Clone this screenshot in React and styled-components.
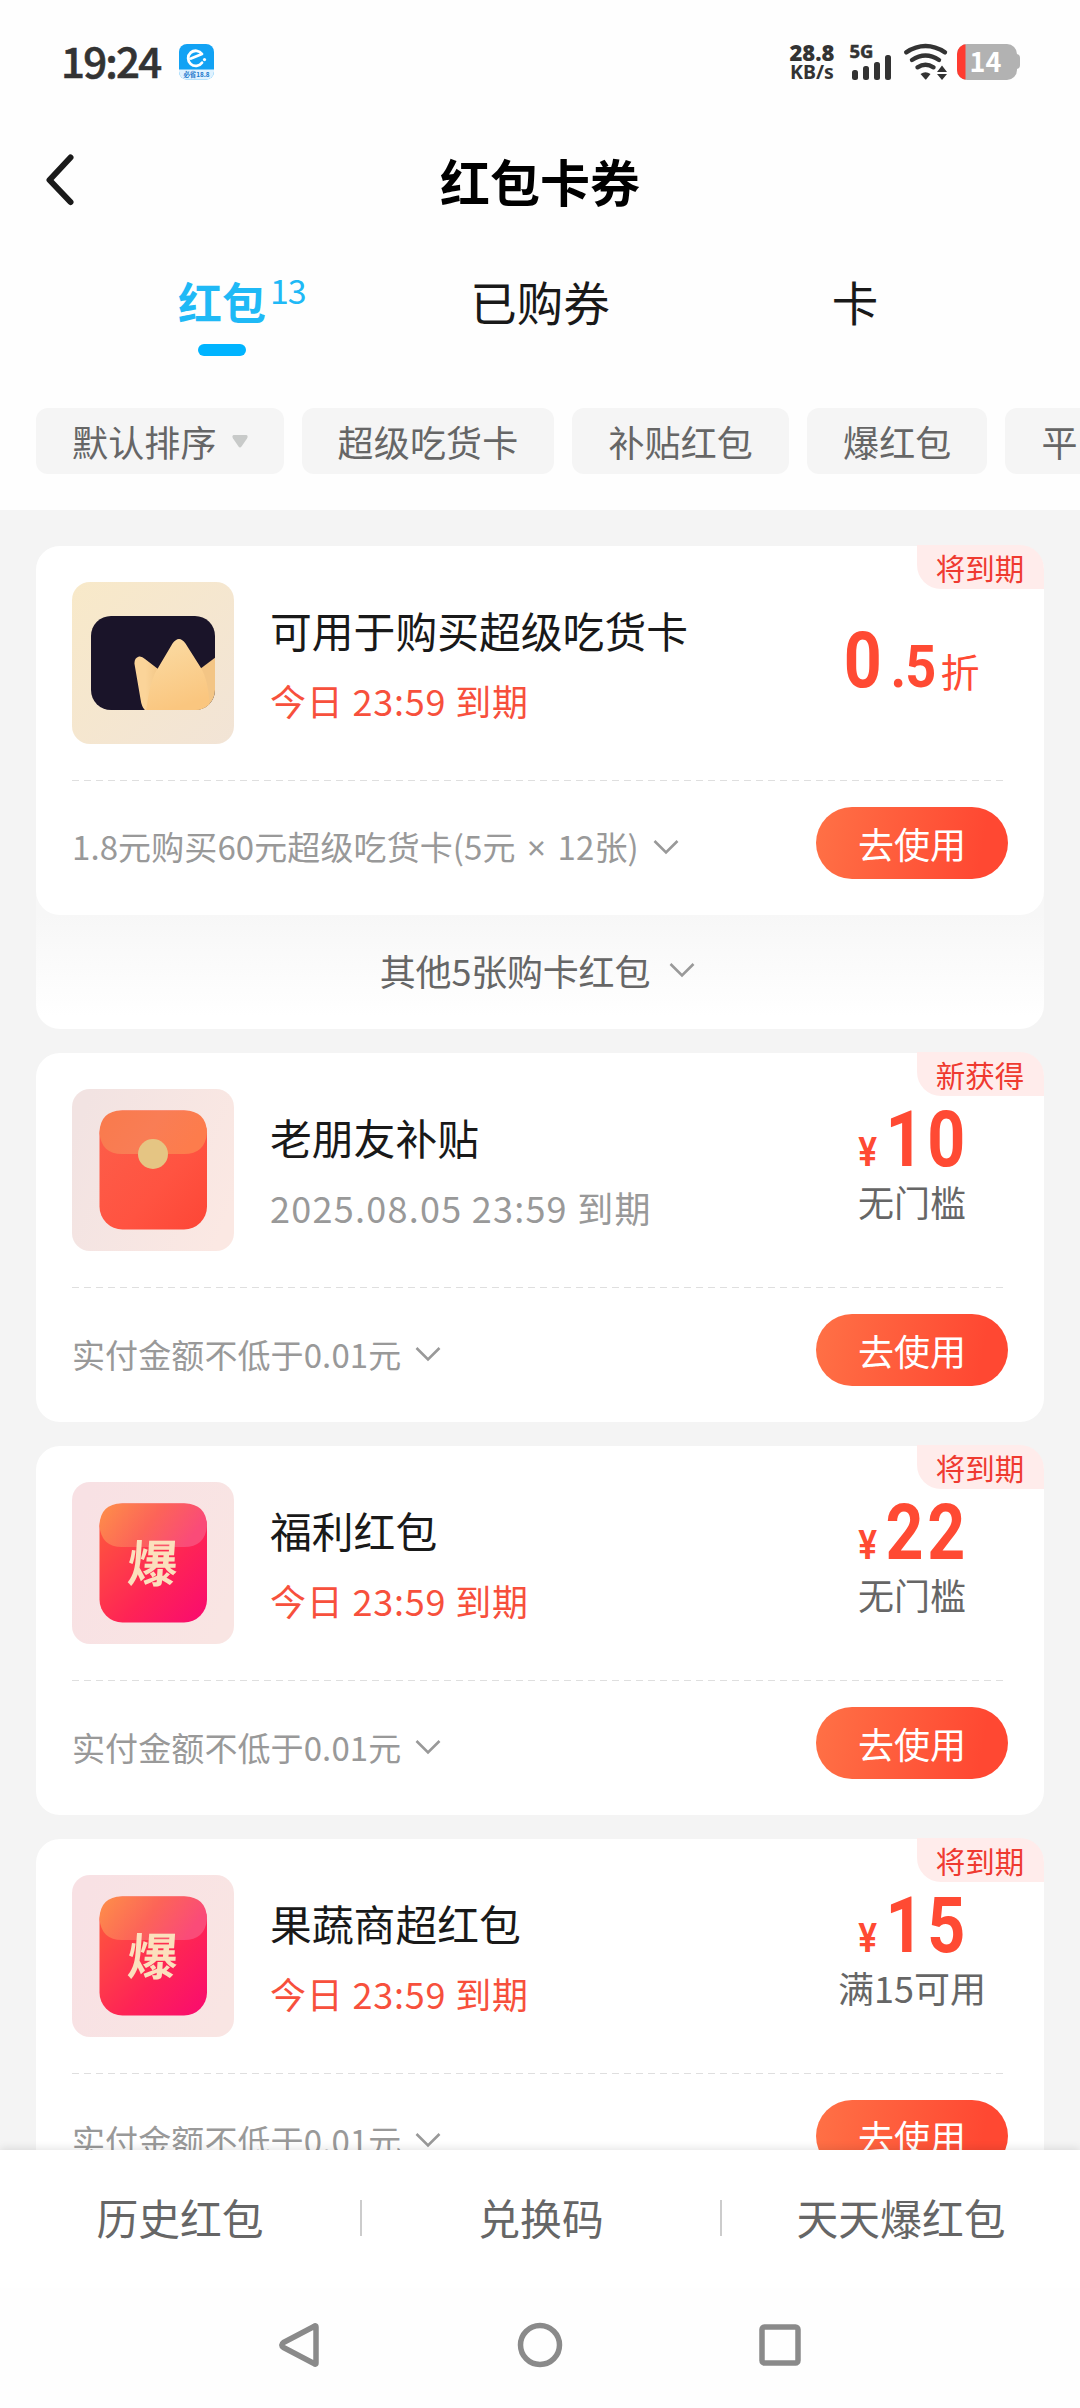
import React from 'react';
import styled, {createGlobalStyle} from 'styled-components';

const GlobalStyle = createGlobalStyle`
    * {
        box-sizing: border-box;
    }
    body {
        margin: 0;
        background: #fff;
        font-family: "Noto Sans CJK SC", "Noto Sans", sans-serif;
    }
    svg {
        flex: none;
        overflow: visible;
    }
`;

const Page = styled.div`
    display: flex;
    flex-direction: column;
    width: 1080px;
    height: 2408px;
    overflow: hidden;
    background: #fefefe;
    color: #191919;
    white-space: nowrap;
`;

/* ---------- status bar ---------- */
const StatusBar = styled.div`
    display: flex;
    align-items: center;
    height: 124px;
    padding: 0 60px 0 61px;
    color: #333;
`;
const Clock = styled.div`
    width: 118px;
    padding-bottom: 5px;
    font-size: 42px;
    font-weight: 500;
    line-height: 50px;
    letter-spacing: -1.8px;
    -webkit-text-stroke: 0.6px #333;
`;
const StatusRight = styled.div`
    display: flex;
    align-items: center;
    margin-left: auto;
    height: 36px;
`;
const Speed = styled.div`
    width: 50px;
    margin-right: 14px;
    text-align: center;
    font-family: "Noto Sans", sans-serif;
    font-weight: 700;
    font-size: 19.5px;
    line-height: 20px;
    & b {
        display: block;
        font-size: 22px;
    }
`;
const WifiBox = styled.div`
    display: flex;
    margin: 0 9px 0 12px;
`;

/* ---------- title and tabs ---------- */
const TitleBar = styled.div`
    display: grid;
    grid-template-columns: 120px 1fr 120px;
    align-items: center;
    height: 116px;
    padding-bottom: 5px;
    & svg {
        margin-left: 44px;
    }
`;
const Title = styled.h1`
    margin: 0;
    text-align: center;
    font-size: 50px;
    line-height: 60px;
    font-weight: 700;
    color: #000;
`;
const Tabs = styled.div`
    display: grid;
    grid-template-columns: 318px 318px 312px;
    height: 168px;
    padding: 31px 0 0 63px;
`;
const Tab = styled.div`
    display: flex;
    flex-direction: column;
    align-items: center;
    font-size: ${p => p.$active ? 44 : 46.5}px;
    font-weight: ${p => p.$active ? 700 : 400};
    line-height: 60px;
    color: ${p => p.$active ? '#1fb9f6' : '#191919'};
    & span {
        position: relative;
    }
    &::after {
        content: '';
        width: 48px;
        height: 12px;
        margin-top: 13px;
        border-radius: 6px;
        background: ${p => p.$active ? '#00b4ff' : 'transparent'};
    }
`;
const Count = styled.i`
    position: absolute;
    left: 100%;
    top: -11px;
    margin-left: 4px;
    font-size: 34px;
    font-style: normal;
    font-weight: 400;
    letter-spacing: -1px;
`;

const Chips = styled.div`
    display: flex;
    gap: 18px;
    height: 102px;
    padding-left: 36px;
    overflow: hidden;
`;
const Chip = styled.div`
    display: flex;
    flex: none;
    align-items: center;
    gap: 15px;
    min-width: 180px;
    height: 66px;
    padding: 0 36px;
    border-radius: 12px;
    background: #f5f5f5;
    color: #666;
    font-size: 36px;
    line-height: 66px;
    letter-spacing: 0.15px;
`;

/* ---------- coupon list ---------- */
const List = styled.div`
    display: flex;
    flex-direction: column;
    gap: 24px;
    height: 1640px;
    padding: 36px 36px 0;
    overflow: hidden;
    background: #f4f4f4;
`;
const Group = styled.div`
    flex: none;
    border-radius: 24px;
    background: ${p => p.$stacked ? 'linear-gradient(#f7f7f7 369px, #fff 470px)' : 'none'};
`;
const Card = styled.div`
    position: relative;
    display: flex;
    flex-direction: column;
    height: 369px;
    padding: 36px 36px 0;
    border-radius: 24px;
    background: #fff;
`;
const Flag = styled.div`
    position: absolute;
    top: -1px;
    right: 0;
    width: 127px;
    height: 44px;
    padding-right: 1px;
    border-radius: 0 24px 0 24px;
    background: #ffeceb;
    color: #ef3a30;
    font-size: 29.5px;
    line-height: 44px;
    text-align: center;
`;
const Main = styled.div`
    display: flex;
    height: 198px;
`;
const Info = styled.div`
    flex: 1;
    padding: 18px 0 0 36px;
`;
const Name = styled.div`
    font-size: 41.8px;
    line-height: 60px;
`;
const Expire = styled.div`
    margin-top: 15px;
    font-size: 36px;
    line-height: 50px;
    letter-spacing: ${p => p.$soon ? 0.8 : 1.25}px;
    color: ${p => p.$soon ? '#f7503c' : '#999'};
`;
const Value = styled.div`
    display: flex;
    flex-direction: column;
    align-items: center;
    width: 192px;
    padding-top: ${p => p.$discount ? 34 : 6}px;
    color: #666;
    font-size: 36px;
    line-height: 50px;
`;
const Amount = styled.div`
    display: flex;
    align-items: baseline;
    height: 81px;
    padding: ${p => p.$discount ? '0 4px 0 0' : '0 0 0 9px'};
    color: #ff4a33;
    line-height: 90px;
`;
const Digits = styled.span`
    margin-right: ${p => p.$gap || 0}px;
    font-family: Roboto, sans-serif;
    font-weight: 700;
    font-size: ${p => p.$size}px;
    letter-spacing: ${p => p.$size > 70 ? 4.5 : -1}px;
    transform: scaleX(${p => p.$size > 70 ? 0.85 : 0.9});
`;
const Yen = styled.span`
    font-family: Roboto, sans-serif;
    font-weight: 600;
    font-size: 40px;
    transform: scaleX(0.88);
`;
const Unit = styled.span`
    margin-left: 3px;
    font-size: 39px;
`;

const Dashes = styled.div`
    flex: none;
    width: 932px;
    height: 1px;
    background: repeating-linear-gradient(90deg, #dfdfdf 0 7px, #fff 7px 12px);
`;
const Foot = styled.div`
    display: flex;
    align-items: center;
    justify-content: space-between;
    height: 72px;
    margin-top: 26px;
`;
const Rule = styled.div`
    display: flex;
    align-items: center;
    gap: 14px;
    padding-top: 8px;
    color: #999;
    font-size: 33px;
    line-height: 50px;
    letter-spacing: 0.1px;
`;
const Times = styled.span`
    margin: 0 4px;
    font-family: "Noto Sans", sans-serif;
`;
const UseButton = styled.button`
    width: 192px;
    height: 72px;
    padding: 0;
    border: 0;
    border-radius: 36px;
    background: linear-gradient(100deg, #ff7146, #ff4832 85%);
    color: #fff;
    font: 400 36px/72px "Noto Sans CJK SC", sans-serif;
`;
const More = styled.div`
    display: flex;
    align-items: center;
    justify-content: center;
    gap: 19px;
    height: 114px;
    padding: 0 5px 4px 0;
    color: #666;
    font-size: 36px;
    line-height: 50px;
    letter-spacing: -0.2px;
`;

/* ---------- bottom ---------- */
const Footer = styled.div`
    position: relative;
    display: grid;
    grid-template-columns: repeat(3, 1fr);
    align-items: center;
    height: 138px;
    padding-bottom: 2px;
    background: #fff;
    box-shadow: 0 -2px 8px rgba(0, 0, 0, 0.1);
    clip-path: inset(-12px 0 0 0);
`;
const FooterLink = styled.div`
    border-left: ${p => p.$first ? 0 : 2}px solid #ccc;
    height: 36px;
    color: #666;
    font-size: 41.8px;
    line-height: 34px;
    text-align: center;
`;
const NavBar = styled.div`
    display: grid;
    grid-template-columns: repeat(3, 240px);
    justify-content: center;
    align-items: center;
    justify-items: center;
    height: 120px;
    padding-bottom: 6px;
`;

const AppBadge = () => (
    <svg width="36" height="36" viewBox="0 0 36 36">
        <defs>
            <clipPath id="badge"><rect width="35" height="35.5" rx="8"/></clipPath>
        </defs>
        <g clipPath="url(#badge)">
            <rect width="36" height="36" fill="#12a2f4"/>
            <rect y="25.5" width="36" height="11" fill="#dff2ff"/>
        </g>
        <path d="M12 14.5 L23 10 A7.6 7.6 0 1 0 23 18.7" fill="none" stroke="#fff" strokeWidth="2.8" strokeLinecap="round" strokeLinejoin="round"/>
        <circle cx="25.5" cy="15.6" r="1.6" fill="#fff"/>
        <text x="17.5" y="32.8" textAnchor="middle" fontSize="6.4" fontWeight="700" fill="#1a78cc">必省18.8</text>
    </svg>
);

const Signal = () => (
    <svg width="41" height="36" viewBox="0 0 41 36" fill="#333">
        <text x="-1.5" y="14" fontFamily="Noto Sans" fontWeight="700" fontSize="18.5" stroke="#333" strokeWidth="0.5">5G</text>
        <rect x="1" y="26" width="6" height="10" rx="2.5"/>
        <rect x="12" y="22" width="6" height="14" rx="2.5"/>
        <rect x="23" y="18" width="6" height="18" rx="2.5"/>
        <rect x="34" y="11" width="6" height="25" rx="2.5"/>
    </svg>
);

const Wifi = () => (
    <svg width="44" height="36" viewBox="0 0 44 36">
        <g fill="none" stroke="#333" strokeWidth="4.4" strokeLinecap="round">
            <path d="M2.2 8.4 Q21.5 -4.2 41 8.4"/>
            <path d="M8 16 Q21.5 7 35 16"/>
            <path d="M13.5 23.3 Q21.5 18.4 29.5 23.3"/>
        </g>
        <path d="M16.5 30 Q21.5 26.6 26.5 30 L22.5 35 Q21.7 36 20.9 35 Z" fill="#333"/>
        <path d="M38 21.5 L43 28 H33 Z M38 36 L43 30 H33 Z" fill="#333"/>
    </svg>
);

const Battery = () => (
    <svg width="63" height="36" viewBox="0 0 63 36">
        <defs>
            <clipPath id="cell"><rect width="60" height="36" rx="10"/></clipPath>
        </defs>
        <rect x="52" y="10" width="11" height="15" rx="4" fill="#b2b2b2"/>
        <g clipPath="url(#cell)">
            <rect width="60" height="36" fill="#b2b2b2"/>
            <rect width="8.5" height="36" fill="#ff3b30"/>
        </g>
        <text x="28.5" y="27.8" textAnchor="middle" fontWeight="700" fontSize="27" fill="#fff">14</text>
    </svg>
);

const Chevron = ({color}) => (
    <svg width="26" height="16" viewBox="0 0 26 16">
        <path d="M1.5 2 L13 13.5 L24.5 2" fill="none" stroke={color} strokeWidth="2.6"/>
    </svg>
);

const CrownIcon = () => (
    <svg width="162" height="162" viewBox="0 0 162 162">
        <defs>
            <linearGradient id="sand" x1="0" y1="0" x2="1" y2="1">
                <stop offset="0" stopColor="#f8e9c9"/>
                <stop offset="1" stopColor="#f2e4d6"/>
            </linearGradient>
            <linearGradient id="gold" x1="0" y1="0" x2="0.3" y2="1">
                <stop offset="0" stopColor="#fbdca5"/>
                <stop offset="1" stopColor="#fac67f"/>
            </linearGradient>
            <linearGradient id="ear" x1="0" y1="0" x2="1" y2="0">
                <stop offset="0.4" stopColor="#fbd499"/>
                <stop offset="1" stopColor="#f1c483"/>
            </linearGradient>
            <clipPath id="plate"><rect x="19" y="34" width="124" height="94" rx="20"/></clipPath>
        </defs>
        <rect width="162" height="162" rx="18" fill="url(#sand)"/>
        <g clipPath="url(#plate)">
            <rect x="19" y="34" width="124" height="94" fill="#1a1429"/>
            <path d="M76 130 Q70 128 68.5 117 L62.5 82 Q62 76 67 74.5 Q70 74 73 77 L86 87 L90 130 Z" fill="url(#ear)"/>
            <path d="M128 87 L144 75 V130 H120 Z" fill="#f3c585"/>
            <path d="M74 130 Q78 97 86 86 L100.5 61.5 Q107 52.5 113.5 61.5 L129 86 Q137 99 138 130 Z" fill="url(#gold)"/>
        </g>
    </svg>
);

const EnvelopeIcon = ({hot}) => (
    <svg width="162" height="162" viewBox="0 0 162 162">
        <defs>
            <linearGradient id={hot ? 'bgHot' : 'bg'} x1="0" y1="0.3" x2="1" y2="0.7">
                <stop offset="0" stopColor={hot ? '#f8e1e4' : '#f2e3e2'}/>
                <stop offset="1" stopColor={hot ? '#f9e5e3' : '#fbe8e3'}/>
            </linearGradient>
            <linearGradient id={hot ? 'bodyHot' : 'body'} x1="0" y1="0" x2="1" y2="1">
                <stop offset="0.15" stopColor={hot ? '#fe5040' : '#fd5c48'}/>
                <stop offset="0.6" stopColor={hot ? '#fe2455' : '#ff5341'}/>
                <stop offset="1" stopColor={hot ? '#f90a70' : '#fd4636'}/>
            </linearGradient>
            <linearGradient id={hot ? 'flapHot' : 'flap'} x1="0" y1="0" x2="1" y2="0.3">
                <stop offset="0" stopColor={hot ? '#fe9049' : '#f97a4c'}/>
                <stop offset="0.55" stopColor={hot ? '#fc6458' : '#f97d55'}/>
                <stop offset="1" stopColor={hot ? '#fa4b78' : '#fd7c4c'}/>
            </linearGradient>
        </defs>
        <rect width="162" height="162" rx="18" fill={hot ? 'url(#bgHot)' : 'url(#bg)'}/>
        <rect x="27.5" y="21.5" width="107.5" height="119" rx="23" fill={hot ? 'url(#bodyHot)' : 'url(#body)'}/>
        <path d="M27.5 44 Q28 21.5 50 21.5 H112 Q134.5 21.5 135 44 Q133 65 112 65 H50 Q29.5 65 27.5 44 Z" fill={hot ? 'url(#flapHot)' : 'url(#flap)'}/>
        {hot
            ? <text x="81" y="100" textAnchor="middle" fontSize="50" fontWeight="700" fill="#fbe0bd" transform="skewX(-4) translate(5.5 0)">爆</text>
            : <circle cx="81" cy="65" r="15" fill="#e5c583"/>}
    </svg>
);

const coupons = [
    {
        flag: '将到期', icon: <CrownIcon/>, name: '可用于购买超级吃货卡', expire: '今日 23:59 到期', soon: true,
        discount: ['0', '.5'], rule: <span>1.8元购买60元超级吃货卡(5元 <Times>×</Times> 12张)</span>, more: '其他5张购卡红包'
    },
    {
        flag: '新获得', icon: <EnvelopeIcon/>, name: '老朋友补贴', expire: '2025.08.05 23:59 到期',
        amount: '10', limit: '无门槛', rule: '实付金额不低于0.01元'
    },
    {
        flag: '将到期', icon: <EnvelopeIcon hot/>, name: '福利红包', expire: '今日 23:59 到期', soon: true,
        amount: '22', limit: '无门槛', rule: '实付金额不低于0.01元'
    },
    {
        flag: '将到期', icon: <EnvelopeIcon hot/>, name: '果蔬商超红包', expire: '今日 23:59 到期', soon: true,
        amount: '15', limit: '满15可用', rule: '实付金额不低于0.01元'
    }
];

const Coupon = ({item}) => (
    <Group $stacked={!!item.more}>
        <Card>
            <Flag>{item.flag}</Flag>
            <Main>
                {item.icon}
                <Info>
                    <Name>{item.name}</Name>
                    <Expire $soon={item.soon}>{item.expire}</Expire>
                </Info>
                <Value $discount={!!item.discount}>
                    {item.discount
                        ? <Amount $discount>
                            <Digits $size={78} $gap={-2}>{item.discount[0]}</Digits>
                            <Digits $size={60}>{item.discount[1]}</Digits>
                            <Unit>折</Unit>
                        </Amount>
                        : <Amount>
                            <Yen>¥</Yen>
                            <Digits $size={78}>{item.amount}</Digits>
                        </Amount>}
                    {item.limit}
                </Value>
            </Main>
            <Dashes/>
            <Foot>
                <Rule>{item.rule}<Chevron color="#999"/></Rule>
                <UseButton>去使用</UseButton>
            </Foot>
        </Card>
        {item.more && <More>{item.more}<Chevron color="#999"/></More>}
    </Group>
);

export default function App() {
    return (
        <Page>
            <GlobalStyle/>
            <StatusBar>
                <Clock>19:24</Clock>
                <AppBadge/>
                <StatusRight>
                    <Speed><b>28.8</b>KB/s</Speed>
                    <Signal/>
                    <WifiBox><Wifi/></WifiBox>
                    <Battery/>
                </StatusRight>
            </StatusBar>
            <TitleBar>
                <svg width="32" height="54" viewBox="0 0 32 54">
                    <path d="M26.5 4.5 L5.5 27 L26.5 49" fill="none" stroke="#1a1a1a" strokeWidth="6" strokeLinecap="round" strokeLinejoin="round"/>
                </svg>
                <Title>红包卡券</Title>
            </TitleBar>
            <Tabs>
                <Tab $active><span>红包<Count>13</Count></span></Tab>
                <Tab><span>已购券</span></Tab>
                <Tab><span>卡</span></Tab>
            </Tabs>
            <Chips>
                <Chip>
                    默认排序
                    <svg width="16" height="13" viewBox="0 0 16 13">
                        <path d="M1.5 0 H14.5 Q16.5 1 15 3.5 L9.5 11.5 Q8 13.5 6.5 11.5 L1 3.5 Q-0.5 1 1.5 0 Z" fill="#c8cac9"/>
                    </svg>
                </Chip>
                <Chip>超级吃货卡</Chip>
                <Chip>补贴红包</Chip>
                <Chip>爆红包</Chip>
                <Chip>平</Chip>
            </Chips>
            <List>
                {coupons.map(item => <Coupon key={item.name} item={item}/>)}
            </List>
            <Footer>
                <FooterLink $first>历史红包</FooterLink>
                <FooterLink>兑换码</FooterLink>
                <FooterLink>天天爆红包</FooterLink>
            </Footer>
            <NavBar>
                <svg width="48" height="48" viewBox="0 0 48 48">
                    <path d="M40 6 V42 Q40 44 38 42.5 L7.5 26.5 Q4 24 7.5 21.5 L38 5.5 Q40 4 40 6 Z" fill="none" stroke="#8a8a8a" strokeWidth="5.5" strokeLinejoin="round"/>
                </svg>
                <svg width="48" height="48" viewBox="0 0 48 48">
                    <circle cx="24" cy="24" r="19.5" fill="none" stroke="#8a8a8a" strokeWidth="5.5"/>
                </svg>
                <svg width="48" height="48" viewBox="0 0 48 48">
                    <rect x="6" y="6" width="36" height="36" rx="2.5" fill="none" stroke="#8a8a8a" strokeWidth="5.5"/>
                </svg>
            </NavBar>
        </Page>
    );
}
